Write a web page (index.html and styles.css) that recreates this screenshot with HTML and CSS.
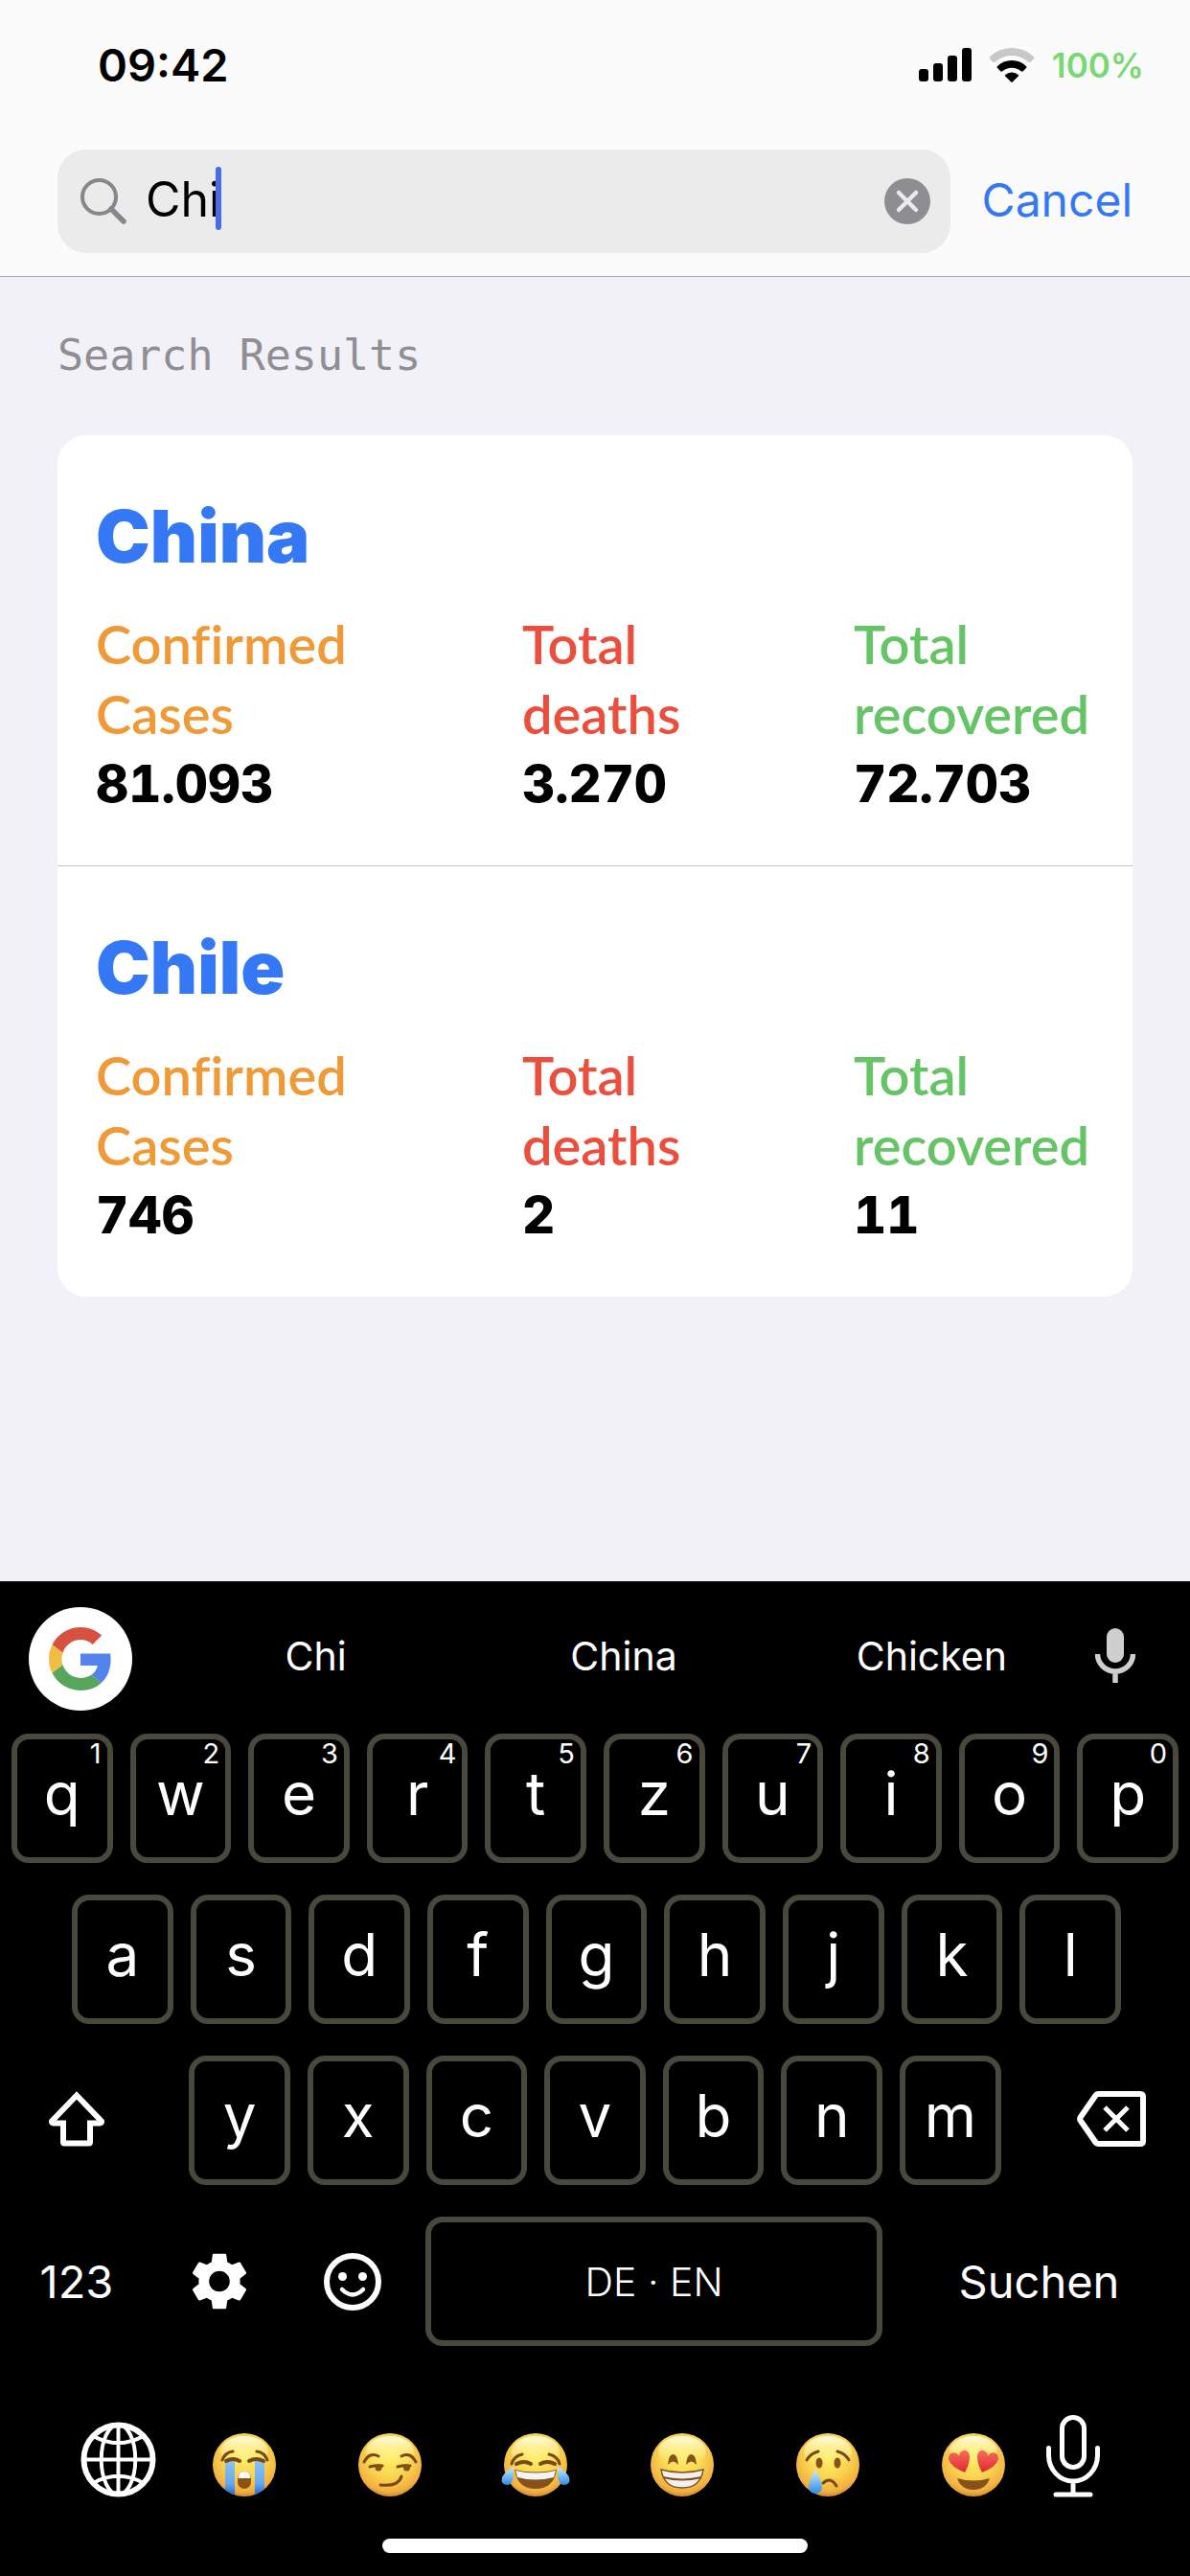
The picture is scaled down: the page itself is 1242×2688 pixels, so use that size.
FILE: index.html
```html
<!DOCTYPE html>
<html lang="en">
<head>
<meta charset="utf-8">
<meta name="viewport" content="width=device-width, initial-scale=1">
<title>Search Results</title>
<link rel="stylesheet" href="styles.css">
</head>
<body>
<header class="header">
  <div class="status">
    <span class="status-time">09:42</span>
    <div class="status-icons">
      <svg class="signal" viewBox="0 0 55 35" aria-hidden="true"><rect y="22" width="10" height="13" rx="3"/><rect x="15" y="16" width="10" height="19" rx="3"/><rect x="30" y="8" width="10" height="27" rx="3"/><rect x="45" width="10" height="35" rx="3"/></svg>
      <svg class="wifi" viewBox="0 0 48 36" aria-hidden="true"><path fill="#c8c8ca" d="M24 0C15 0 7 3.500 1 9.500Q0 10.500 1 11.500L4.500 15Q5.500 15.500 6.500 14.700C11.500 10.500 17.500 8 24 8S36.500 10.500 41.500 14.700Q42.500 15.500 43.500 15L47 11.500Q48 10.500 47 9.500C41 3.500 33 0 24 0Z"/><path d="M24 13C18 13 13 15.200 9 19Q8 20 9 21L12.500 24.500Q13.400 25 14.300 24.300C17 22 20.300 20.700 24 20.700S31 22 33.700 24.300Q34.600 25 35.500 24.500L39 21Q40 20 39 19C35 15.200 30 13 24 13Z"/><path d="M24 25.500Q20 25.500 17.300 28Q16.500 29 17.400 29.800L23.200 35.500Q24 36.300 24.800 35.500L30.600 29.800Q31.500 29 30.700 28Q28 25.500 24 25.500Z"/></svg>
      <span class="battery">100%</span>
    </div>
  </div>
  <form class="search">
    <div class="field">
      <svg class="magnifier" viewBox="0 0 48 48" aria-hidden="true"><circle cx="19.500" cy="19.500" r="17.500"/><path d="M32 32 45 45" stroke-width="5.500"/></svg>
      <input class="field-input" type="text" value="Chi" aria-label="Search">
      <span class="caret"></span>
      <button class="clear" type="button" aria-label="Clear text"><svg viewBox="0 0 48 48"><circle cx="24" cy="24" r="24" fill="#8e8d92"/><path d="M15 15 33 33M33 15 15 33" stroke="#ebebec" stroke-width="4.500" stroke-linecap="round"/></svg></button>
    </div>
    <button class="cancel" type="button">Cancel</button>
  </form>
</header>

<main class="content">
  <h1 class="section-title">Search Results</h1>
  <section class="card">
    <article class="country">
      <h2 class="country-name">China</h2>
      <dl class="stats">
        <div><dt class="confirmed">Confirmed<br>Cases</dt><dd>81.093</dd></div>
        <div><dt class="deaths">Total<br>deaths</dt><dd>3.270</dd></div>
        <div><dt class="recovered">Total<br>recovered</dt><dd>72.703</dd></div>
      </dl>
    </article>
    <article class="country">
      <h2 class="country-name">Chile</h2>
      <dl class="stats">
        <div><dt class="confirmed">Confirmed<br>Cases</dt><dd>746</dd></div>
        <div><dt class="deaths">Total<br>deaths</dt><dd>2</dd></div>
        <div><dt class="recovered">Total<br>recovered</dt><dd>11</dd></div>
      </dl>
    </article>
  </section>
</main>

<section class="keyboard" aria-label="Keyboard">
  <div class="toolbar">
    <button class="google" type="button" aria-label="Google"><svg viewBox="0 0 48 48"><path fill="#d85140" d="M24 9.500c3.540 0 6.710 1.220 9.210 3.600l6.850-6.850C35.900 2.380 30.470 0 24 0 14.620 0 6.510 5.380 2.560 13.220l7.980 6.190C12.430 13.720 17.740 9.500 24 9.500z"/><path fill="#5383ec" d="M46.980 24.550c0-1.570-.15-3.090-.38-4.550H24v9.020h12.940c-.58 2.960-2.260 5.480-4.780 7.180l7.730 6c4.510-4.180 7.090-10.360 7.090-17.650z"/><path fill="#f1bd42" d="M10.530 28.590c-.48-1.450-.76-2.990-.76-4.590s.27-3.140.76-4.590l-7.980-6.190C.92 16.460 0 20.120 0 24c0 3.880.92 7.540 2.560 10.780l7.970-6.190z"/><path fill="#58a55c" d="M24 48c6.480 0 11.930-2.130 15.890-5.810l-7.730-6c-2.150 1.450-4.920 2.300-8.160 2.300-6.260 0-11.570-4.220-13.470-9.910l-7.980 6.190C6.510 42.620 14.620 48 24 48z"/></svg></button>
    <div class="suggestions">
      <button type="button">Chi</button>
      <button type="button">China</button>
      <button type="button">Chicken</button>
    </div>
    <button class="voice" type="button" aria-label="Voice input"><svg viewBox="0 0 42 57"><rect x="12" width="18" height="36" rx="9" fill="#cfcfcf"/><path d="M2.500 27a18.500 18 0 0 0 37 0M21 45v12" fill="none" stroke="#cfcfcf" stroke-width="5.500"/></svg></button>
  </div>

  <div class="rows">
    <div class="row">
      <button class="key" type="button">q<span class="hint">1</span></button>
      <button class="key" type="button">w<span class="hint">2</span></button>
      <button class="key" type="button">e<span class="hint">3</span></button>
      <button class="key" type="button">r<span class="hint">4</span></button>
      <button class="key" type="button">t<span class="hint">5</span></button>
      <button class="key" type="button">z<span class="hint">6</span></button>
      <button class="key" type="button">u<span class="hint">7</span></button>
      <button class="key" type="button">i<span class="hint">8</span></button>
      <button class="key" type="button">o<span class="hint">9</span></button>
      <button class="key" type="button">p<span class="hint">0</span></button>
    </div>
    <div class="row row-inset">
      <button class="key" type="button">a</button>
      <button class="key" type="button">s</button>
      <button class="key" type="button">d</button>
      <button class="key" type="button">f</button>
      <button class="key" type="button">g</button>
      <button class="key" type="button">h</button>
      <button class="key" type="button">j</button>
      <button class="key" type="button">k</button>
      <button class="key" type="button">l</button>
    </div>
    <div class="row row-shift">
      <button class="plain plain-left" type="button" aria-label="Shift"><svg width="60" height="58" viewBox="0 0 60 58"><path d="M30 4.500 56 31.500Q56.500 33.500 54 33.500H44V53Q44 54.500 42.500 54.500H17.500Q16 54.500 16 53V33.500H6Q3.500 33.500 4 31.500Z"/></svg></button>
      <button class="key" type="button">y</button>
      <button class="key" type="button">x</button>
      <button class="key" type="button">c</button>
      <button class="key" type="button">v</button>
      <button class="key" type="button">b</button>
      <button class="key" type="button">n</button>
      <button class="key" type="button">m</button>
      <button class="plain plain-right" type="button" aria-label="Delete"><svg width="72" height="58" viewBox="0 0 72 58"><path d="M22 3H66Q69 3 69 6V52Q69 55 66 55H22Q20.500 55 19.500 53.500L3.500 30.500Q2.800 29 3.500 27.500L19.500 4.500Q20.500 3 22 3Z"/><path d="M29 17 53 41M53 17 29 41" stroke-width="5"/></svg></button>
    </div>
    <div class="row row-space">
      <button class="plain" type="button">123</button>
      <button class="plain" type="button" aria-label="Settings"><svg class="solid" width="60" height="61" viewBox="2 2 20 20"><path d="M19.140 12.940c.04-.3.060-.61.060-.94 0-.32-.02-.64-.07-.94l2.030-1.580c.18-.14.230-.41.120-.61l-1.920-3.320c-.12-.22-.37-.29-.59-.22l-2.390.96c-.5-.38-1.030-.7-1.620-.94l-.36-2.540c-.04-.24-.24-.41-.48-.41h-3.840c-.24 0-.43.170-.47.410l-.36 2.540c-.59.240-1.130.570-1.620.94l-2.390-.96c-.22-.08-.47 0-.59.220L2.740 8.870c-.12.210-.08.470.12.610l2.030 1.580c-.05.300-.09.630-.09.940s.02.640.070.940l-2.030 1.580c-.18.140-.23.410-.12.610l1.920 3.320c.12.220.37.290.59.220l2.390-.96c.5.380 1.030.7 1.620.94l.36 2.540c.05.240.24.410.48.410h3.840c.24 0 .44-.17.470-.41l.36-2.540c.59-.24 1.130-.56 1.620-.94l2.390.96c.22.080.470 0 .59-.22l1.920-3.320c.12-.22.070-.47-.12-.61l-2.010-1.580zM12 15.600c-1.980 0-3.600-1.620-3.600-3.600s1.620-3.600 3.600-3.600 3.600 1.620 3.600 3.600-1.620 3.600-3.600 3.600z"/></svg></button>
      <button class="plain" type="button" aria-label="Emoji"><svg width="60" height="60" viewBox="0 0 60 60"><circle cx="30" cy="30" r="27"/><path d="M19 38Q30 49 41 38" stroke-width="4.500" stroke-linecap="round"/><circle class="solid" cx="19.500" cy="24.500" r="4.500"/><circle class="solid" cx="40.500" cy="24.500" r="4.500"/></svg></button>
      <button class="key space" type="button">DE · EN</button>
      <button class="plain" type="button">Suchen</button>
    </div>
  </div>

  <div class="dock">
    <button class="globe" type="button" aria-label="Next keyboard"><svg viewBox="0 0 80 80"><circle cx="40" cy="40" r="36.500" stroke-width="6"/><path d="M40 3V77M3 40H77M13 15Q40 30 67 15M13 65Q40 50 67 65" /><ellipse cx="40" cy="40" rx="18" ry="37"/></svg></button>
    <div class="emojis">
      <button type="button" aria-label="Loudly crying"><svg viewBox="-36 -33 72 66">
        <defs>
          <radialGradient id="face" cx=".5" cy=".36" r=".66"><stop offset="0" stop-color="#fff068"/><stop offset=".5" stop-color="#f9d651"/><stop offset=".85" stop-color="#f2b040"/><stop offset="1" stop-color="#cd8130"/></radialGradient>
          <linearGradient id="shine" x2="0" y2="1"><stop offset="0" stop-color="#fffce0"/><stop offset="1" stop-color="#fff27a" stop-opacity="0"/></linearGradient>
          <linearGradient id="stream" x2="0" y2="1"><stop offset="0" stop-color="#86c3f3"/><stop offset=".6" stop-color="#6aaaf0"/><stop offset="1" stop-color="#1c59cc"/></linearGradient>
          <linearGradient id="drop" x2="0" y2="1"><stop offset="0" stop-color="#c9efff"/><stop offset="1" stop-color="#2e8be8"/></linearGradient>
          <linearGradient id="heart" x2="0" y2="1"><stop offset="0" stop-color="#fa6a5c"/><stop offset="1" stop-color="#dd2a30"/></linearGradient>
          <clipPath id="round"><circle r="33"/></clipPath>
          <g id="head"><circle r="33" fill="url(#face)"/><ellipse cy="-14" rx="25" ry="16" fill="url(#shine)"/></g>
        </defs>
        <use href="#head"/><g clip-path="url(#round)" fill="url(#stream)"><rect x="-20" y="-4" width="10" height="38"/><rect x="11" y="-4" width="10" height="38"/></g>
        <g class="line"><path d="M-23-5Q-20-13-12-14M24-5Q21-13 13-14"/><path d="M-19-4Q-12-8-5-4M5-4Q12-8 20-4" stroke-width="4"/></g><rect x="-7" y="7" width="14" height="18" rx="7" fill="#8c5317"/><path d="M-6.500 14Q-6 7 0 7T6.500 14Z" fill="#fff"/></svg></button>
      <button type="button" aria-label="Smirking"><svg viewBox="-36 -33 72 66"><use href="#head"/><g class="line"><path d="M-27-3Q-21-14-12-9M12-9Q21-14 27-3M-21 2Q-14 0-8 1M8 2Q15 0 21 1M-10 21Q9 23 12 12"/></g><g class="dark"><circle cx="-12" cy="3" r="3.500"/><circle cx="17.500" cy="3" r="3.500"/></g></svg></button>
      <button type="button" aria-label="Tears of joy"><svg viewBox="-36 -33 72 66"><use href="#head"/><g class="line"><path d="M-25-1Q-23-9-14-11M25-1Q23-9 14-11"/><path d="M-20-1Q-12-5-5-1M20-1Q12-5 5-1" stroke-width="4"/></g><path class="dark" d="M-22 5Q0 10 22 5Q19 25 0 25T-22 5Z"/><path d="M-21 6Q0 11 21 6L19 13Q0 18-19 13Z" fill="#f4f4f6"/><path id="tear" d="M-23 2Q-22 20-29 21Q-37 21-35 13Q-33 8-23 2Z" fill="url(#drop)"/><use href="#tear" transform="scale(-1 1)"/></svg></button>
      <button type="button" aria-label="Beaming"><svg viewBox="-36 -33 72 66"><use href="#head"/><path class="dark" d="M-15 0Q-14-11-9.500-11T-4 0Q-9.500-7-15 0ZM15 0Q14-11 9.500-11T4 0Q9.500-7 15 0Z"/><path d="M-22 5Q0 11 22 5Q19 24 0 24T-22 5Z" fill="#f1f1f4" stroke="#83501b" stroke-width="1.500"/><path d="M-20 13Q0 18 20 13" fill="none" stroke="#83501b" stroke-width="2"/></svg></button>
      <button type="button" aria-label="Crying"><svg viewBox="-36 -33 72 66"><use href="#head"/><g class="line"><path d="M-22-5Q-18-12-10-14M22-5Q18-12 10-14M-5 19Q3 12 9 22"/></g><g class="dark"><ellipse cx="-9" cy="-2" rx="3.500" ry="5.500"/><ellipse cx="10" cy="-2" rx="3.500" ry="5.500"/></g><path d="M-13 5Q-20 17-20 23A7 7 0 0 0-6 23Q-6 17-13 5Z" fill="url(#drop)"/></svg></button>
      <button type="button" aria-label="Heart eyes"><svg viewBox="-36 -33 72 66"><use href="#head"/><path id="love" d="M-9 8Q-24 2-26-6C-26-15-17-14-15-9C-15-16-4-18-4-8Q-4-1-9 8Z" fill="url(#heart)"/><use href="#love" transform="scale(-1 1)"/><path class="dark" d="M-17 14Q0 19 17 14Q13 26 0 26T-17 14Z"/></svg></button>
    </div>
    <button class="dictate" type="button" aria-label="Dictate"><svg viewBox="0 0 56 86"><rect x="16.500" y="2.500" width="23" height="52" rx="11.500"/><path d="M2.500 34.500V42a25.500 27 0 0 0 51 0V34.500M28 69V83M10 83H46"/></svg></button>
  </div>
  <div class="home-bar"></div>
</section>
</body>
</html>
```
FILE: styles.css
```css
* {
  box-sizing: border-box;
}

body {
  margin: 0;
  min-height: 100vh;
  display: flex;
  flex-direction: column;
  background: #f2f1f7;
  color: #000;
  font-family: Inter, "Liberation Sans", sans-serif;
}

button {
  margin: 0;
  padding: 0;
  border: 0;
  background: none;
  color: inherit;
  font: inherit;
}

svg {
  display: block;
  flex-shrink: 0;
}

/* Header */

.header {
  background: #fbfbfc;
  border-bottom: 1px solid #a9a9ae;
}

.status {
  display: flex;
  justify-content: space-between;
  align-items: center;
  height: 135px;
  padding: 0 48px 0 102px;
}

.status-time {
  font-size: 47px;
  font-weight: 600;
}

.status-icons {
  display: flex;
  align-items: center;
  gap: 18px;
}

.signal {
  width: 55px;
  height: 35px;
}

.wifi {
  width: 48px;
  height: 36px;
}

.battery {
  color: #78d873;
  font-size: 35px;
  font-weight: 600;
}

.search {
  display: flex;
  align-items: center;
  gap: 33px;
  padding: 21px 60px 24px;
}

.field {
  position: relative;
  flex: 1;
  min-width: 0;
  height: 108px;
  display: flex;
  align-items: center;
  padding: 0 21px 0 24px;
  border-radius: 30px;
  background: #ebebec;
}

.magnifier {
  width: 48px;
  height: 48px;
  fill: none;
  stroke: #87868b;
  stroke-width: 4;
  stroke-linecap: round;
}

.field-input {
  flex: 1;
  min-width: 0;
  height: 100%;
  padding: 0 0 4px 20px;
  border: 0;
  outline: 0;
  background: none;
  color: #000;
  font: 50px Inter, "Liberation Sans", sans-serif;
}

.caret {
  position: absolute;
  left: 165px;
  top: 18px;
  width: 6px;
  height: 66px;
  border-radius: 3px;
  background: #4a6be8;
}

.clear svg {
  width: 48px;
  height: 48px;
}

.cancel {
  padding-bottom: 4px;
  color: #3478f6;
  font-size: 48px;
}

/* Results */

.content {
  flex: 1;
  padding: 55px 60px;
}

.section-title {
  margin: 0 0 56px;
  color: #8f8e94;
  font: 45px/54px "DejaVu Sans Mono", monospace;
}

.card {
  border-radius: 30px;
  background: #fff;
}

.country {
  padding: 57px 42px 48px 40px;
}

.country + .country {
  border-top: 1px solid #c4c4c6;
}

.country-name {
  margin: 0 0 28px;
  color: #3478f6;
  font-size: 76px;
  font-weight: 900;
  line-height: 96px;
}

.stats {
  display: grid;
  grid-template-columns: 445fr 346fr 249fr;
  margin: 0;
  line-height: 73px;
}

.stats dt {
  font-family: Lato, "Open Sans", sans-serif;
  font-size: 56px;
  font-weight: 600;
  font-variant-ligatures: none;
}

.stats dd {
  margin: 1px 0 0;
  font-size: 53px;
  font-weight: 800;
  font-variant-numeric: tabular-nums;
}

.confirmed {
  color: #f09a37;
}

.deaths {
  color: #eb4e3d;
}

.recovered {
  color: #65c466;
}

/* Keyboard */

.keyboard {
  background: #000;
  color: #fff;
}

.toolbar {
  display: flex;
  align-items: center;
  padding: 27px 57px 24px 30px;
}

.google {
  width: 108px;
  height: 108px;
  display: grid;
  place-items: center;
  border-radius: 50%;
  background: #fff;
}

.google svg {
  width: 66px;
  height: 66px;
}

.suggestions {
  flex: 1;
  display: grid;
  grid-template-columns: repeat(3, 1fr);
  padding: 0 10px 6px 31px;
  font-size: 41px;
}

.voice {
  padding-bottom: 8px;
}

.voice svg {
  width: 42px;
  height: 57px;
}

.rows {
  display: grid;
  gap: 33px;
  padding: 0 12px;
}

.row {
  display: grid;
  grid-template-columns: repeat(10, minmax(0, 1fr));
  gap: 18px;
}

.row-inset {
  grid-template-columns: repeat(9, minmax(0, 1fr));
  padding: 0 60px 0 63px;
}

.row-shift {
  grid-template-columns: 168fr repeat(7, 106fr) 168fr;
}

.row-space {
  grid-template-columns: 136fr 126fr 116fr 477fr 291fr;
}

.key {
  position: relative;
  height: 135px;
  padding-bottom: 10px;
  border: 6px solid #48483c;
  border-radius: 18px;
  font-size: 62px;
}

.hint {
  position: absolute;
  top: 0;
  right: 6px;
  font-size: 29px;
  line-height: 30px;
}

.space {
  padding: 0;
  font-size: 41px;
  font-weight: 300;
}

.plain {
  display: flex;
  align-items: center;
  justify-content: center;
  font-size: 47px;
}

.plain svg {
  fill: none;
  stroke: #fff;
  stroke-width: 6;
}

.plain .solid {
  fill: #fff;
  stroke: none;
}

.plain-left {
  justify-content: flex-start;
  padding: 0 0 4px 38px;
}

.plain-right {
  justify-content: flex-end;
  padding: 0 34px 4px 0;
}

.dock {
  display: flex;
  align-items: flex-end;
  padding: 72px 94px 43px 84px;
}

.globe svg {
  width: 79px;
  height: 79px;
  fill: none;
  stroke: #fff;
  stroke-width: 4;
}

.emojis {
  flex: 1;
  display: flex;
  justify-content: space-between;
  padding: 0 40px 1px 56px;
}

.emojis svg {
  width: 72px;
  height: 66px;
  overflow: visible;
}

.line {
  fill: none;
  stroke: #7a4815;
  stroke-width: 3;
  stroke-linecap: round;
}

.dark {
  fill: #86511a;
}

.dictate svg {
  width: 56px;
  height: 86px;
  fill: none;
  stroke: #fff;
  stroke-width: 5;
  stroke-linecap: round;
}

.home-bar {
  width: 444px;
  max-width: 60%;
  height: 15px;
  margin: 0 auto;
  border-radius: 8px;
  background: #fff;
}

.keyboard::after {
  content: "";
  display: block;
  height: 24px;
}
```
